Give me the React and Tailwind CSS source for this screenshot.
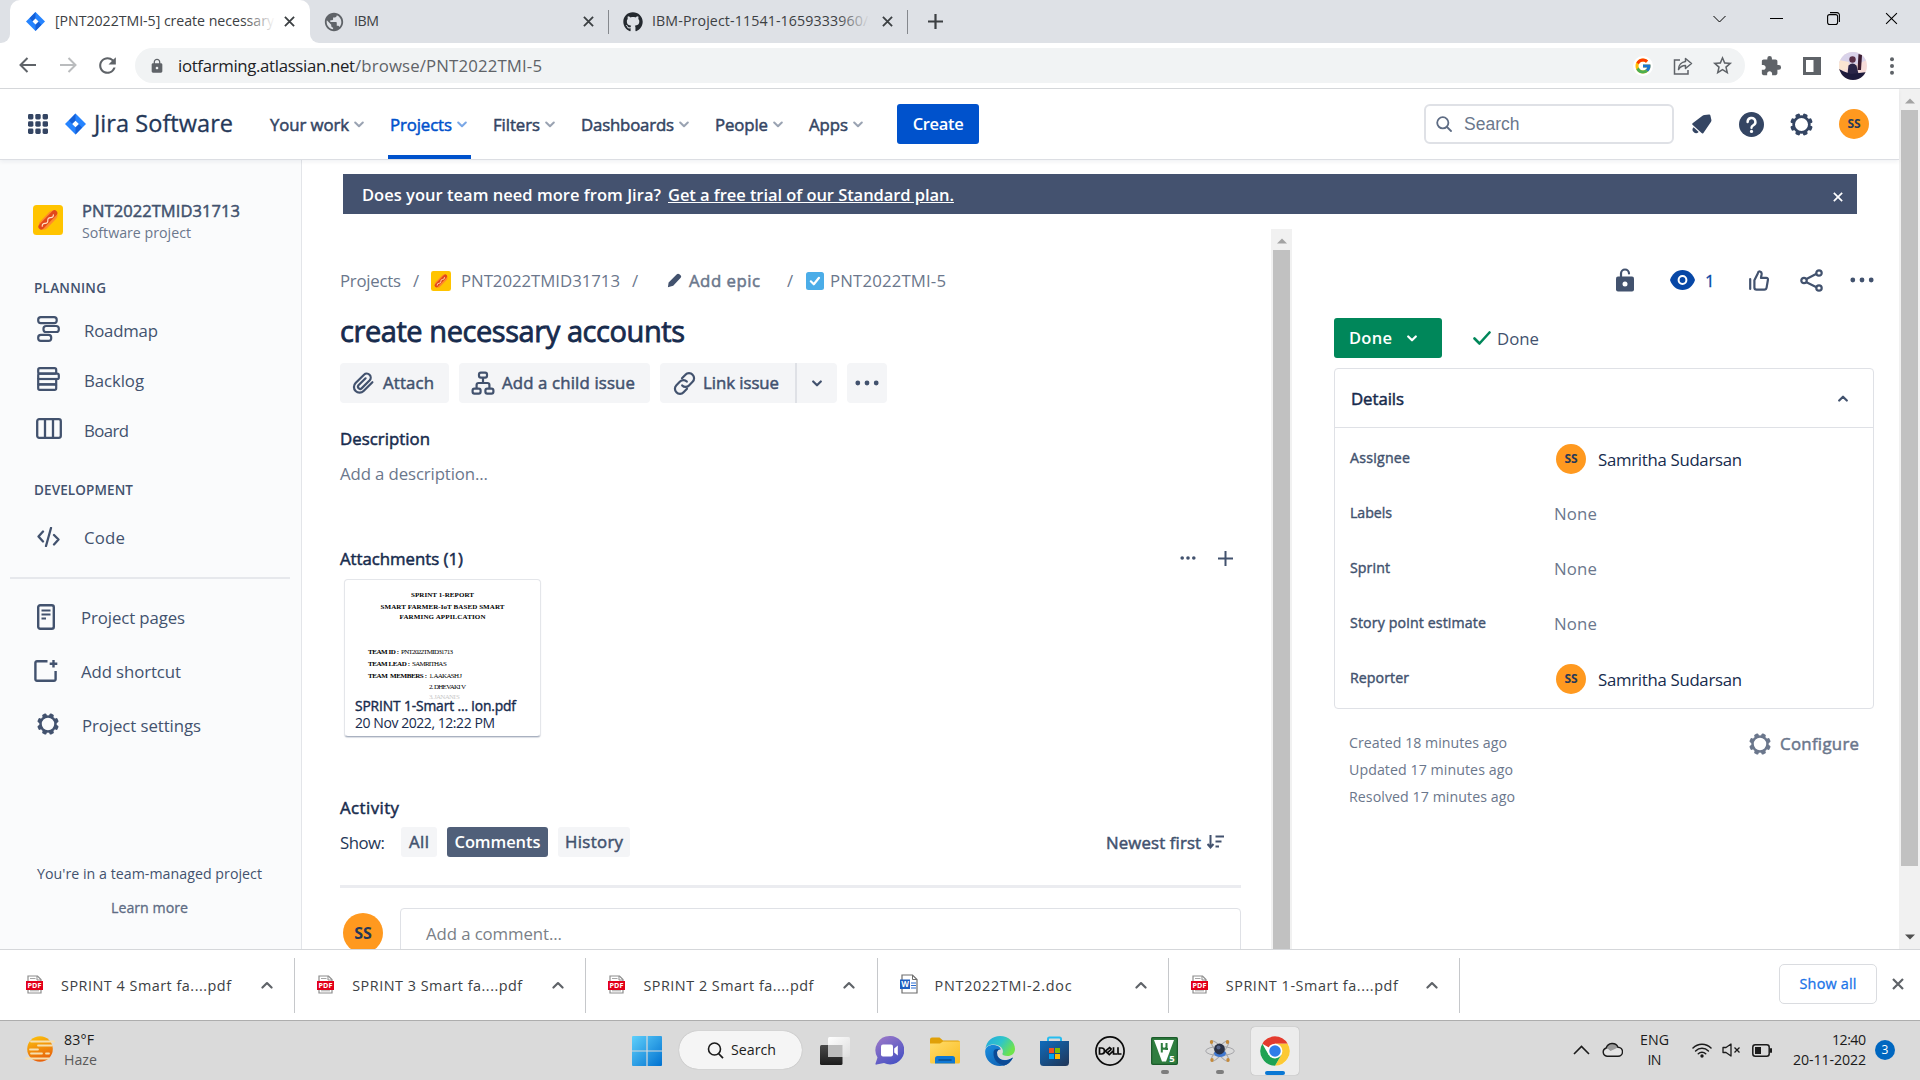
import React, { useLayoutEffect, useRef } from "react";
import { FaGithub } from "react-icons/fa";
import { FcGoogle } from "react-icons/fc";
import { MdExtension, MdPublic, MdLock, MdRefresh, MdStarBorder } from "react-icons/md";

/* Regular letterforms thickened a little: sits between weight 400 and 600. */
const MED = " [-webkit-text-stroke:0.5px_currentColor] ";

/* Text set to a fixed advance width by adjusting its letter spacing. */
function Fit({ w, className = "", children }) {
  const ref = useRef(null);
  useLayoutEffect(() => {
    const el = ref.current;
    el.style.letterSpacing = "0px";
    const natural = el.getBoundingClientRect().width;
    const n = el.textContent.length;
    el.style.letterSpacing = (w - natural) / Math.max(1, n - 1) + "px";
  }, [w, children]);
  return (
    <span className={"block shrink-0 whitespace-pre " + className} style={{ width: w }}>
      <span ref={ref}>{children}</span>
    </span>
  );
}

function Svg({ w, h, vb, className = "", children }) {
  return (
    <svg width={w} height={h ?? w} viewBox={vb ?? `0 0 ${w} ${h ?? w}`} fill="none" className={"block shrink-0 " + className}>
      {children}
    </svg>
  );
}

const JiraMark = ({ w, h }) => (
  <Svg w={w} h={h} vb="0 0 24 24">
    <path d="M12 0 24 12 12 24 0 12Z" fill="#2684ff" />
    <path d="M12 0V8.5L8.5 12 4.5 8Z" fill="#1560d8" />
    <path d="M12 24V15.5L15.500 12 19.5 16Z" fill="#1560d8" />
    <path d="M12 8.2 15.8 12 12 15.8 8.2 12Z" fill="#fff" />
  </Svg>
);

const Chevron = ({ className = "", w = 10, sw = 2 }) => (
  <Svg w={w} h={w * 0.7} vb="0 0 10 7" className={className}>
    <path d="M1.2 1.5 5 5.3 8.8 1.5" stroke="currentColor" strokeWidth={sw} strokeLinecap="round" strokeLinejoin="round" />
  </Svg>
);

const Cross = ({ w = 11, sw = 2, className = "" }) => (
  <Svg w={w} vb="0 0 12 12" className={className}>
    <path d="M1 1 11 11M11 1 1 11" stroke="currentColor" strokeWidth={sw} />
  </Svg>
);

const Dots = ({ w = 24, r = 2.4, className = "" }) => (
  <Svg w={w} h={6} vb={`0 0 ${w} 6`} className={className}>
    <circle cx={r + 0.4} cy="3" r={r} fill="currentColor" />
    <circle cx={w / 2} cy="3" r={r} fill="currentColor" />
    <circle cx={w - r - 0.4} cy="3" r={r} fill="currentColor" />
  </Svg>
);

const Gear = ({ w, className = "" }) => (
  <Svg w={w} vb="0 0 24 24" className={className}>
    <circle cx="12" cy="12" r="8.2" stroke="currentColor" strokeWidth="2.8" />
    {[22.5, 67.5, 112.5, 157.5, 202.5, 247.5, 292.5, 337.5].map((a) => (
      <rect key={a} x="9.5" y="0.2" width="5" height="4" rx="1.4" fill="currentColor" transform={`rotate(${a} 12 12)`} />
    ))}
  </Svg>
);

const HotDog = ({ w }) => (
  <Svg w={w} vb="0 0 30 30">
    <rect width="30" height="30" rx="3.5" fill="#ffc400" />
    <g transform="rotate(-46 15 15)">
      <rect x="3.6" y="10.4" width="22.8" height="9.6" rx="4.8" fill="#ff8b2b" />
      <rect x="2.6" y="12" width="24.8" height="5.6" rx="2.8" fill="#e2471b" />
      <path d="M6.5 15.2q2-2.2 4 0t4 0 4 0 4 0" stroke="#ffe2c2" strokeWidth="1.2" strokeLinecap="round" />
    </g>
  </Svg>
);

const Avatar = ({ className }) => (
  <span className={"flex shrink-0 items-center justify-center rounded-full bg-[#ff991f] font-bold text-[#253858] " + className}>SS</span>
);

const ArrowUp = ({ flip, color }) => (
  <Svg w={10} h={6} className={flip ? "rotate-180" : ""}>
    <path d="M5 0.5 10 5.5H0Z" fill={color} />
  </Svg>
);

/* ------------------------------------------------------------ browser */

function TabStrip() {
  return (
    <div className="flex h-[43px] items-center bg-[#dee1e6] text-[14.2px] text-[#3c4043]">
      <div className="flex h-full w-[10px] items-end bg-white">
        <div className="h-full w-full rounded-br-[9px] bg-[#dee1e6]" />
      </div>
      <div className="h-full w-[300px] bg-[#dee1e6]">
        <div className="flex h-full items-center rounded-t-[10px] bg-white pl-4">
          <JiraMark w={19} h={19} />
          <div className="relative -mt-[2px] ml-[10px] w-[220px] overflow-hidden">
            <Fit w={219}>[PNT2022TMI-5] create necessary</Fit>
            <div className="absolute inset-y-0 right-0 w-8 bg-gradient-to-r from-transparent to-white" />
          </div>
          <Cross className="ml-[9px]" />
        </div>
      </div>
      <div className="h-full w-[10px] bg-white">
        <div className="h-full w-full rounded-bl-[9px] bg-[#dee1e6]" />
      </div>
      <MdPublic className="ml-[3px] size-[22px] shrink-0 text-[#5f6368]" />
      <Fit w={25} className="-mt-[2px] ml-[9px]">IBM</Fit>
      <Cross className="ml-[204px]" />
      <div className="ml-[14px] h-6 w-px bg-[#85888d]" />
      <FaGithub className="ml-[14px] size-[20px] shrink-0 text-[#24292f]" />
      <div className="relative -mt-[2px] ml-[9px] w-[218px] overflow-hidden">
        <Fit w={224}>IBM-Project-11541-1659333960/S</Fit>
        <div className="absolute inset-y-0 right-0 w-8 bg-gradient-to-r from-transparent to-[#dee1e6]" />
      </div>
      <Cross className="ml-[12px]" />
      <div className="ml-[14px] h-6 w-px bg-[#85888d]" />
      <Svg w={15} className="ml-5">
        <path d="M7.5 0V15M0 7.5H15" stroke="#3c4043" strokeWidth="2.2" />
      </Svg>
      <div className="mb-[6px] ml-auto flex items-center text-black">
        <Svg w={13} h={8}><path d="M.5 1 6.5 7 12.5 1" stroke="currentColor" /></Svg>
        <div className="ml-[44px] h-px w-[13px] bg-black" />
        <Svg w={13} className="ml-[44px]">
          <rect x=".6" y="2.6" width="10" height="10" rx="2" stroke="currentColor" strokeWidth="1.1" />
          <path d="M3 .6H10a2.4 2.4 0 0 1 2.4 2.4V10" stroke="currentColor" strokeWidth="1.1" />
        </Svg>
        <Cross w={13} sw={1} className="ml-[45px] mr-[22px]" />
      </div>
    </div>
  );
}

function Toolbar() {
  return (
    <div className="flex h-[46px] items-center border-b border-[#d5d7da] bg-white text-[#5f6368]">
      <Svg w={17} h={16} className="-mt-px ml-[19px]"><path d="M17 8H1.5M8.5 1 1.5 8l7 7" stroke="currentColor" strokeWidth="2" /></Svg>
      <Svg w={17} h={16} className="-mt-px ml-6 text-[#babcbe]"><path d="M0 8H15.5M8.5 1l7 7-7 7" stroke="currentColor" strokeWidth="2" /></Svg>
      <MdRefresh className="-mt-px ml-[18px] size-[25px] shrink-0" />
      <div className="ml-[15px] flex h-[35px] w-[1610px] items-center rounded-full bg-[#f1f3f4] pl-[14px]">
        <MdLock className="size-4" />
        <Fit w={177} className="ml-[13px] mt-px text-[16.8px] text-[#202124]">iotfarming.atlassian.net</Fit>
        <Fit w={187} className="mt-px text-[16.8px]">/browse/PNT2022TMI-5</Fit>
        <span className="ml-auto flex size-5 items-center justify-center rounded-full bg-white"><FcGoogle className="size-[18px]" /></span>
        <Svg w={20} className="ml-[20px]">
          <path d="M7 4H1.5v14H15v-4" stroke="currentColor" strokeWidth="1.5" />
          <path d="M12.5 2.5 18.5 7.5 12.5 12.5V9.5C9 9.5 7 11 5.5 13.5 5.5 9 8.5 6 12.5 5.5Z" stroke="currentColor" strokeWidth="1.5" strokeLinejoin="round" />
        </Svg>
        <MdStarBorder className="ml-[18px] mr-[11px] size-[23px]" />
      </div>
      <MdExtension className="ml-[15px] size-[22px] shrink-0" />
      <Svg w={18} className="ml-[21px]"><path fillRule="evenodd" d="M0 0H18V18H0ZM3 3V15H10.5V3Z" fill="currentColor" /></Svg>
      <Svg w={28} vb="0 0 28 28" className="ml-[18px] rounded-full">
        <rect width="28" height="28" fill="#f6dcd9" />
        <path d="M0 0H28V8L18 12 0 11Z" fill="#d9d3ea" />
        <path d="M0 8 10 10 8 17 0 19Z" fill="#fbe6d2" />
        <circle cx="13.5" cy="7.5" r="3.2" fill="#5a3048" />
        <path d="M8 26 9.500 13.5q4-4 8 0l3 12.5Z" fill="#2a2547" />
        <path d="M0 17 5 19.5 12 22 28 20V28H0Z" fill="#1d1b3c" />
        <path d="M19.5 2 23 3 22 18 18.500 18Z" fill="#3b1c30" />
      </Svg>
      <Svg w={4} h={18} className="ml-[23px]">
        <circle cx="2" cy="2.2" r="2" fill="currentColor" />
        <circle cx="2" cy="9" r="2" fill="currentColor" />
        <circle cx="2" cy="15.8" r="2" fill="currentColor" />
      </Svg>
    </div>
  );
}

/* --------------------------------------------------------------- jira */

function NavItem({ w, gap, active, children }) {
  return (
    <div className={"flex h-full shrink-0 flex-col " + gap}>
      <div className={"flex flex-1 items-center pt-1 " + (active ? "text-[#0052cc]" : "text-[#344563]")}>
        <div className="flex items-center gap-[5px] pl-[2px] pr-[4px]">
          <Fit w={w} className={"mt-[2px] text-[16.8px]" + MED}>{children}</Fit>
          <Chevron className={active ? "text-[#7aa7e6]" : "text-[#9aa3b2]"} />
        </div>
      </div>
      <div className={"h-1 " + (active ? "bg-[#0052cc]" : "")} />
    </div>
  );
}

function TopNav() {
  return (
    <div className="relative z-10 flex h-[71px] shrink-0 items-center border-b border-[#dcdee3] bg-white shadow-[0_2px_4px_rgba(9,30,66,0.06)]">
      <Svg w={20} className="ml-7 text-[#344563]">
        {[0, 7.3, 14.6].map((y) => [0, 7.3, 14.6].map((x) => <rect key={x + "-" + y} x={x} y={y} width="5.4" height="5.4" rx="1.4" fill="currentColor" />))}
      </Svg>
      <div className="ml-[17px]"><JiraMark w={21} h={22} /></div>
      <Fit w={139} className="-mt-px ml-2 text-[23.5px] text-[#253858] [-webkit-text-stroke:0.3px_currentColor]">Jira Software</Fit>
      <NavItem w={79} gap="ml-[35px]">Your work</NavItem>
      <NavItem w={62} gap="ml-[20px]" active>Projects</NavItem>
      <NavItem w={47} gap="ml-[20px]">Filters</NavItem>
      <NavItem w={93} gap="ml-[20px]">Dashboards</NavItem>
      <NavItem w={53} gap="ml-[20px]">People</NavItem>
      <NavItem w={39} gap="ml-[20px]">Apps</NavItem>
      <button className="ml-[30px] flex h-10 w-[82px] items-center justify-center rounded-[3px] bg-[#0052cc]">
        <Fit w={51} className="mt-px text-[16.5px] font-semibold text-white">Create</Fit>
      </button>
      <div className="ml-auto flex h-10 w-[250px] items-center rounded-[6px] border-2 border-[#dfe1e6] pl-[10px]">
        <Svg w={16} className="text-[#5e6c84]">
          <circle cx="6.8" cy="6.8" r="5.6" stroke="currentColor" strokeWidth="1.8" />
          <path d="M11 11 15 15" stroke="currentColor" strokeWidth="1.8" strokeLinecap="round" />
        </Svg>
        <span className="ml-3 font-[Liberation_Sans] text-[17.5px] text-[#6b778c]">Search</span>
      </div>
      <Svg w={21} className="ml-[17px] text-[#344563]">
        <path d="M11.5 1.8q.8-.9 2-.9l4.600-.3q1-.1 1.300.9l1 4.500q.2 1.100-.5 1.900L12.400 18.900q-.8.9-1.800.2L1.500 10.8q-.8-.9.1-1.600Z" fill="currentColor" />
        <path d="M2.6 13.2 7.6 18A3.4 3.4 0 1 1 2.6 13.2Z" fill="currentColor" />
      </Svg>
      <Svg w={25} className="ml-[27px]">
        <circle cx="12.5" cy="12.5" r="12.5" fill="#344563" />
        <path d="M8.6 10a3.9 3.9 0 1 1 5.6 3.4q-1.7.8-1.7 2.3" stroke="#fff" strokeWidth="2.4" strokeLinecap="round" />
        <circle cx="12.5" cy="19.4" r="1.6" fill="#fff" />
      </Svg>
      <Gear w={23} className="ml-[26px] text-[#344563]" />
      <Avatar className="ml-[26px] mr-[30px] size-[30px] text-[12px]" />
    </div>
  );
}

function SideRow({ icon, w, left = 36, textLeft = 84, mt = "", children }) {
  return (
    <div className={"flex h-[50px] shrink-0 items-center " + mt}>
      <div className="flex shrink-0 items-center text-[#42526e]" style={{ paddingLeft: left, width: textLeft }}>{icon}</div>
      <Fit w={w} className="mt-[2px] text-[16.8px] text-[#42526e]">{children}</Fit>
    </div>
  );
}

function Sidebar() {
  return (
    <div className="flex w-[302px] shrink-0 flex-col border-r border-[#e3e5e9] bg-[#fafbfc] text-[#42526e]">
      <div className="mt-[35px] flex h-[50px] items-center pl-[33px]">
        <HotDog w={30} />
        <div className="ml-[19px] mt-[3px] flex flex-col">
          <Fit w={158} className={"text-[16.5px] leading-[23px]" + MED}>PNT2022TMID31713</Fit>
          <Fit w={109} className="text-[14.2px] leading-[22px] text-[#6b778c]">Software project</Fit>
        </div>
      </div>
      <Fit w={72} className="ml-[34px] mt-[33px] text-[13.5px] font-semibold leading-5">PLANNING</Fit>
      <SideRow mt="mt-[7px]" w={74} left={37} icon={
        <Svg w={23} h={26} className="-mt-[2px]">
          <rect x="1.2" y="1.2" width="18.5" height="6" rx="2.6" stroke="currentColor" strokeWidth="2.2" />
          <rect x="6.5" y="10" width="15.3" height="6" rx="2.6" stroke="currentColor" strokeWidth="2.2" />
          <rect x="1.2" y="18.8" width="13" height="6" rx="2.6" stroke="currentColor" strokeWidth="2.2" />
        </Svg>}>Roadmap</SideRow>
      <SideRow w={60} left={37} icon={
        <Svg w={23} h={24} className="-mt-[3px]">
          <rect x="1.2" y="1.2" width="18" height="5.4" rx="1.6" stroke="currentColor" strokeWidth="2.2" />
          <rect x="1.2" y="6.6" width="20.6" height="5.4" rx="1.6" stroke="currentColor" strokeWidth="2.2" />
          <rect x="1.2" y="12" width="18" height="5.4" stroke="currentColor" strokeWidth="2.2" />
          <rect x="1.2" y="17.4" width="18" height="5.4" rx="1.6" stroke="currentColor" strokeWidth="2.2" />
        </Svg>}>Backlog</SideRow>
      <SideRow w={45} icon={
        <Svg w={26} h={21} className="-mt-[3px]">
          <rect x="1.2" y="1.2" width="23.6" height="18.6" rx="2" stroke="currentColor" strokeWidth="2.3" />
          <path d="M9 1V20M17 1V20" stroke="currentColor" strokeWidth="2.3" />
        </Svg>}>Board</SideRow>
      <Fit w={99} className="ml-[34px] mt-[25px] text-[13.5px] font-semibold leading-5">DEVELOPMENT</Fit>
      <SideRow mt="mt-[12px]" w={41} left={37} icon={
        <Svg w={23} h={20}>
          <path d="M6 4.5 1.5 9.5 6 14.5M17 8 21.5 12.5 17 17.5M14 1 9 19" stroke="currentColor" strokeWidth="2.3" strokeLinecap="round" strokeLinejoin="round" />
        </Svg>}>Code</SideRow>
      <div className="ml-[10px] mt-[15px] h-[2px] w-[280px] shrink-0 bg-[#e6e8ec]" />
      <SideRow mt="mt-[13px]" w={104} left={37} textLeft={81} icon={
        <Svg w={18} h={26}>
          <rect x="1.2" y="1.2" width="15.6" height="23.6" rx="2" stroke="currentColor" strokeWidth="2.4" />
          <path d="M4.5 6.5H13.5M4.5 10.5H13.5M4.5 14.5H9" stroke="currentColor" strokeWidth="2" />
        </Svg>}>Project pages</SideRow>
      <SideRow mt="mt-1" w={100} left={34} textLeft={81} icon={
        <Svg w={24} h={24}>
          <path d="M13.5 2.2H3A1.6 1.6 0 0 0 1.4 3.8V20.2A1.6 1.6 0 0 0 3 21.8H20A1.6 1.6 0 0 0 21.6 20.2V12" stroke="currentColor" strokeWidth="2.4" />
          <path d="M19.5 1V8.6M15.7 4.8H23.3" stroke="currentColor" strokeWidth="2.4" />
        </Svg>}>Add shortcut</SideRow>
      <SideRow mt="mt-1" w={119} left={37} textLeft={82} icon={<Gear w={22} className="-mt-[2px]" />}>Project settings</SideRow>
      <Fit w={225} className="ml-[37px] mt-[114px] text-[14.2px] leading-5">You're in a team-managed project</Fit>
      <Fit w={77} className="ml-[111px] mt-[14px] text-[14.2px] leading-5 text-[#5e6c84] [-webkit-text-stroke:0.3px_currentColor]">Learn more</Fit>
    </div>
  );
}

function AttachmentCard() {
  return (
    <div className="relative ml-[4px] mt-2 h-[158px] w-[197px] shrink-0 overflow-hidden rounded-[4px] border border-[#e4e6ea] border-b-[#a9b1c0] bg-white shadow-[0_1px_1px_rgba(9,30,66,0.15)]">
      <div className="font-[Liberation_Serif] text-[7px] leading-[9px] text-black">
        <div className="flex flex-col items-center pt-[11px] font-bold">
          <Fit w={63}>SPRINT 1-REPORT</Fit>
          <Fit w={124} className="mt-[3px]">SMART FARMER-IoT BASED SMART</Fit>
          <Fit w={86} className="mt-px">FARMING APPILCATION</Fit>
        </div>
        <div className="ml-[23px] mt-[26px] flex gap-[2px]"><Fit w={31} className="font-bold">TEAM ID :</Fit><Fit w={52}>PNT2022TMID31713</Fit></div>
        <div className="ml-[23px] mt-[3px] flex gap-[2px]"><Fit w={42} className="font-bold">TEAM LEAD :</Fit><Fit w={35}>SAMRITHA S</Fit></div>
        <div className="ml-[23px] mt-[3px] flex gap-[2px]"><Fit w={59} className="font-bold">TEAM  MEMBERS :</Fit><Fit w={33}>1. AAKASH J</Fit></div>
        <Fit w={37} className="ml-[84px] mt-[2px]">2. DHEVAKI V</Fit>
        <Fit w={31} className="ml-[84px] mt-px leading-[8px] text-[#c9c9c9]">3. JANANI S</Fit>
      </div>
      <div className="absolute bottom-[5px] left-[10px] flex flex-col text-[#172b4d]">
        <Fit w={161} className="text-[13.8px] leading-[17px] [-webkit-text-stroke:0.4px_currentColor]">SPRINT 1-Smart ... ion.pdf</Fit>
        <Fit w={140} className="text-[14px] leading-[17px]">20 Nov 2022, 12:22 PM</Fit>
      </div>
    </div>
  );
}

function IssueMain() {
  const btn = "flex h-10 shrink-0 items-center bg-[#f4f5f7] text-[16.8px] text-[#42526e] " + MED;
  return (
    <div className="flex w-[969px] shrink-0 flex-col overflow-hidden pl-[38px] pt-[15px] text-[16.8px] text-[#172b4d]">
      <div className="mt-[40px] flex h-6 shrink-0 items-center text-[#6b778c]">
        <Fit w={61}>Projects</Fit>
        <span className="ml-[12px] w-[18px]">/</span>
        <HotDog w={20} />
        <Fit w={159} className="ml-[10px]">PNT2022TMID31713</Fit>
        <span className="ml-[12px] w-[35px]">/</span>
        <Svg w={15} className="-mt-px text-[#42526e]"><path d="M9.600 1.400q1.400-1.400 2.800-.2l1.200 1q1.200 1.200.1 2.600L6.200 12.800 0.900 14.200 1.600 9.400Z" fill="currentColor" /></Svg>
        <Fit w={71} className={"ml-[7px]" + MED}>Add epic</Fit>
        <span className="ml-[27px] w-[19px]">/</span>
        <Svg w={18}>
          <rect width="18" height="18" rx="2.5" fill="#4bade8" />
          <path d="M4.8 9.3 7.8 12.3 13 5.8" stroke="#fff" strokeWidth="2.2" strokeLinecap="round" strokeLinejoin="round" />
        </Svg>
        <Fit w={116} className="ml-[6px]">PNT2022TMI-5</Fit>
      </div>
      <Fit w={345} className="mt-[18px] text-[29px] leading-10 [-webkit-text-stroke:0.8px_currentColor]">create necessary accounts</Fit>
      <div className="mt-[12px] flex shrink-0">
        <button className={btn + "w-[109px] rounded-[4px] pl-3"}>
          <Svg w={23}>
            <path d="M20.4 10.2 11.6 19a5.6 5.6 0 0 1-8-8L12 2.7a4 4 0 0 1 5.7 5.6L9.6 16.4A2.2 2.2 0 0 1 6.5 13.3L13.6 6.3" stroke="currentColor" strokeWidth="2.2" strokeLinecap="round" />
          </Svg>
          <Fit w={51} className="ml-2">Attach</Fit>
        </button>
        <button className={btn + "ml-[10px] w-[191px] rounded-[4px] pl-3"}>
          <Svg w={24}>
            <rect x="8" y="1.6" width="8" height="5" rx="1.8" stroke="currentColor" strokeWidth="2.2" />
            <rect x="1.6" y="17.6" width="8" height="5" rx="1.8" stroke="currentColor" strokeWidth="2.2" />
            <rect x="14.4" y="17.6" width="8" height="5" rx="1.8" stroke="currentColor" strokeWidth="2.2" />
            <path d="M12 6.6V12M5.6 17.6V14Q5.6 12 7.6 12H16.4Q18.4 12 18.4 14V17.6" stroke="currentColor" strokeWidth="2.2" />
          </Svg>
          <Fit w={133} className="ml-[7px]">Add a child issue</Fit>
        </button>
        <button className={btn + "ml-[10px] w-[135px] rounded-l-[4px] pl-[13px]"}>
          <Svg w={23}>
            <path d="M9 6.2 12.4 2.8a4.7 4.7 0 0 1 7.2 0 4.9 4.9 0 0 1 0 7L16 13.4a4.6 4.6 0 0 1-6.8 0" stroke="currentColor" strokeWidth="2.2" strokeLinecap="round" />
            <path d="M14 16.8 10.6 20.2a4.7 4.7 0 0 1-7.2 0 4.9 4.9 0 0 1 0-7L7 9.6a4.6 4.6 0 0 1 6.8 0" stroke="currentColor" strokeWidth="2.2" strokeLinecap="round" />
          </Svg>
          <Fit w={76} className="ml-[7px]">Link issue</Fit>
        </button>
        <button className={btn + "w-[42px] justify-center rounded-r-[4px] border-l-2 border-[#dfe1e6]"}><Chevron sw={2.2} /></button>
        <button className={btn + "ml-[10px] w-10 justify-center rounded-[4px]"}><Dots /></button>
      </div>
      <Fit w={90} className={"mt-[24px] leading-6" + MED}>Description</Fit>
      <Fit w={148} className="mt-[11px] leading-6 text-[#6b778c]">Add a description...</Fit>
      <div className="mt-[61px] flex h-6 shrink-0 items-center text-[#42526e]">
        <Fit w={123} className={"text-[#172b4d]" + MED}>Attachments (1)</Fit>
        <Dots w={16} r={1.8} className="-mt-[2px] ml-[717px]" />
        <Svg w={15} className="-mt-[2px] ml-[22px]"><path d="M7.5 0V15M0 7.5H15" stroke="currentColor" strokeWidth="2" /></Svg>
      </div>
      <AttachmentCard />
      <Fit w={59} className={"mt-[59px] leading-6" + MED}>Activity</Fit>
      <div className="mt-[7px] flex h-[30px] shrink-0 items-center text-[#42526e]">
        <Fit w={45} className="mt-[2px] text-[#253858]">Show:</Fit>
        <span className="ml-4 flex h-[30px] w-9 items-center justify-center rounded-[3px] bg-[#f4f5f7]"><Fit w={20} className={MED}>All</Fit></span>
        <span className="ml-[10px] flex h-[30px] w-[101px] items-center justify-center rounded-[3px] bg-[#505f79]"><Fit w={86} className="text-[16.5px] font-semibold text-white">Comments</Fit></span>
        <span className="ml-[10px] flex h-[30px] w-[72px] items-center justify-center rounded-[3px] bg-[#f4f5f7]"><Fit w={58} className={MED}>History</Fit></span>
        <Fit w={95} className={"ml-[476px] mt-[2px]" + MED}>Newest first</Fit>
        <Svg w={17} h={14} className="ml-[6px]">
          <path d="M3.5 0V12M0.5 9 3.5 12.4 6.5 9M8.5 1.4H17M8.5 6.4H14.5M8.5 11.4H12" stroke="currentColor" strokeWidth="2" />
        </Svg>
      </div>
      <div className="mt-[28px] h-[3px] w-[901px] shrink-0 bg-[#ebecf0]" />
      <div className="mt-5 flex shrink-0">
        <Avatar className="ml-[3px] mt-[5px] size-10 text-[16px]" />
        <div className="ml-[17px] flex h-[60px] w-[841px] rounded-[4px] border border-[#dfe1e6] pl-[25px] pt-[12px] text-[#7a7f87]">
          <Fit w={136}>Add a comment...</Fit>
        </div>
      </div>
    </div>
  );
}

function DetailRow({ label, lw, person }) {
  return (
    <div className="flex h-[55px] items-center">
      <Fit w={lw} className="-mt-px text-[14.2px] text-[#42526e] [-webkit-text-stroke:0.4px_currentColor]">{label}</Fit>
      <div className="ml-auto flex w-[318px] items-center">
        {person ? (
          <>
            <Avatar className="ml-px size-[30px] text-[12px]" />
            <Fit w={144} className="ml-[12px] mt-[2px] text-[16.8px]">Samritha Sudarsan</Fit>
          </>
        ) : (
          <Fit w={43} className="-ml-px text-[16.8px] text-[#6b778c]">None</Fit>
        )}
      </div>
    </div>
  );
}

function IssueSide() {
  return (
    <div className="flex w-[607px] flex-col pl-[42px] text-[#172b4d]">
      <div className="mt-[51px] flex h-[30px] shrink-0 items-center pl-[282px] text-[#42526e]">
        <Svg w={18} h={24}>
          <rect y="8.5" width="18" height="15" rx="2" fill="currentColor" />
          <path d="M5 9V5.500a4 4 0 0 1 8 0" stroke="currentColor" strokeWidth="2.2" strokeLinecap="round" />
          <circle cx="9" cy="16" r="2.5" fill="#fff" />
        </Svg>
        <Svg w={25} h={20} className="ml-[36px]">
          <path d="M12.5 0C18.5 0 23 4 25 10 23 16 18.5 20 12.5 20S2 16 0 10C2 4 6.5 0 12.5 0Z" fill="#0747a6" />
          <circle cx="12.5" cy="10" r="3.9" stroke="#fff" strokeWidth="2" />
        </Svg>
        <Fit w={8} className="ml-[10px] mt-[2px] text-[16.8px] text-[#0747a6] [-webkit-text-stroke:0.3px_currentColor]">1</Fit>
        <Svg w={20} h={21} className="ml-[36px]">
          <path d="M1.2 9V19" stroke="currentColor" strokeWidth="2.2" strokeLinecap="round" />
          <path d="M5.4 17.5V10.2L8.8 3.4Q9.2 1.2 11 1.5 12.9 2 12.6 4.2L12 7.8H17.2Q19.2 8 18.9 10L17.6 17.6Q17.2 19.6 15.3 19.6H7.5Q5.4 19.6 5.4 17.5Z" stroke="currentColor" strokeWidth="2.2" strokeLinejoin="round" />
        </Svg>
        <Svg w={23} className="ml-[31px]">
          <path d="M6 10.2 17 4.5M6 13 17 18.5" stroke="currentColor" strokeWidth="2.2" />
          <circle cx="4" cy="11.5" r="2.7" stroke="currentColor" strokeWidth="2.2" />
          <circle cx="19" cy="4" r="2.7" stroke="currentColor" strokeWidth="2.2" />
          <circle cx="19" cy="19" r="2.7" stroke="currentColor" strokeWidth="2.2" />
        </Svg>
        <Dots className="ml-[27px]" />
      </div>
      <div className="mt-[23px] flex h-10 shrink-0 items-center">
        <div className="flex h-10 w-[108px] items-center rounded-[3px] bg-[#00875a] pl-[15px] text-white">
          <Fit w={43} className="mt-px text-[16.5px] font-semibold">Done</Fit>
          <Chevron className="ml-[15px]" sw={2.2} />
        </div>
        <Svg w={18} h={15} className="ml-[31px]"><path d="M1.5 7.5 6.5 12.5 16.5 1.5" stroke="#00875a" strokeWidth="2.6" strokeLinecap="round" strokeLinejoin="round" /></Svg>
        <Fit w={42} className="ml-[6px] mt-[2px] text-[16.8px] text-[#42526e]">Done</Fit>
      </div>
      <div className="mt-[10px] h-[341px] w-[540px] shrink-0 rounded-[4px] border border-[#dfe1e6]">
        <div className="flex h-[59px] items-center border-b border-[#dfe1e6] pl-4 pr-[25px]">
          <Fit w={53} className={"mt-[2px] text-[16.8px]" + MED}>Details</Fit>
          <Chevron className="ml-auto rotate-180 text-[#42526e]" sw={2.2} />
        </div>
        <div className="pl-[15px] pt-[3px]">
          <DetailRow label="Assignee" lw={60} person />
          <DetailRow label="Labels" lw={42} />
          <DetailRow label="Sprint" lw={40} />
          <DetailRow label="Story point estimate" lw={136} />
          <DetailRow label="Reporter" lw={59} person />
        </div>
      </div>
      <div className="mt-[20px] flex pl-[15px] text-[#6b778c]">
        <div className="flex w-[400px] flex-col text-[14.2px] leading-[27px]">
          <Fit w={158}>Created 18 minutes ago</Fit>
          <Fit w={164}>Updated 17 minutes ago</Fit>
          <Fit w={166}>Resolved 17 minutes ago</Fit>
        </div>
        <div className="flex h-[30px] items-center">
          <Gear w={22} />
          <Fit w={79} className={"ml-[9px] text-[16.8px]" + MED}>Configure</Fit>
        </div>
      </div>
    </div>
  );
}

function JiraPage() {
  return (
    <div className="flex h-[860px] overflow-hidden">
      <div className="flex w-[1899px] flex-col">
        <TopNav />
        <div className="flex min-h-0 flex-1">
          <Sidebar />
          <div className="flex flex-1 flex-col overflow-hidden bg-white">
            <div className="ml-[41px] mt-[14px] flex h-10 w-[1514px] shrink-0 items-center bg-[#44526f] pl-[19px] text-[16.5px] font-semibold text-white">
              <Fit w={299} className="mt-[3px]">Does your team need more from Jira?</Fit>
              <Fit w={286} className="ml-[7px] mt-[3px] underline">Get a free trial of our Standard plan.</Fit>
              <Cross className="ml-auto mr-[14px] mt-[5px]" w={10} />
            </div>
            <div className="flex min-h-0 flex-1">
              <IssueMain />
              <div className="mt-[15px] flex w-[21px] shrink-0 flex-col items-center bg-[#f1f1f1] pt-[9px]">
                <ArrowUp color="#a3a3a3" />
                <div className="mt-[6px] w-[17px] flex-1 bg-[#c1c1c1]" />
              </div>
              <IssueSide />
            </div>
          </div>
        </div>
      </div>
      <div className="flex w-[21px] flex-col items-center bg-[#f1f1f1] pt-[9px]">
        <ArrowUp color="#a3a3a3" />
        <div className="mt-[6px] h-[756px] w-[17px] bg-[#c1c1c1]" />
        <div className="mt-[68px]"><ArrowUp flip color="#505050" /></div>
      </div>
    </div>
  );
}

/* ---------------------------------------------------------- downloads */

const PdfIcon = () => (
  <Svg w={17} h={19} vb="0 0 17 19">
    <path d="M2 1H11.5L15 4.5V18H2Z" fill="#fff" stroke="#8d8d8d" strokeWidth="1.2" />
    <path d="M4 3.5H9.5M4 15.8H13" stroke="#a5a5a5" />
    <path d="M11 1V5H15" stroke="#8d8d8d" />
    <rect y="6" width="17" height="9" fill="#e2001a" />
    <text x="8.5" y="13.3" textAnchor="middle" fontSize="7.2" fontWeight="700" fill="#fff" fontFamily="Open Sans, sans-serif">PDF</text>
  </Svg>
);

const DocIcon = () => (
  <Svg w={18} h={20} vb="0 0 18 20">
    <path d="M2 1H12.5L17 5.5V19H2Z" fill="#fff" stroke="#6e6e6e" strokeWidth="1.2" />
    <path d="M12.5 1V5.5H17" stroke="#6e6e6e" />
    <path d="M11 9H16M11 11.5H16M11 14H16" stroke="#2b6cd0" />
    <rect y="5.5" width="10" height="9.5" fill="#1f5fc0" />
    <text x="5" y="13.2" textAnchor="middle" fontSize="8" fontWeight="700" fill="#fff" fontFamily="Open Sans, sans-serif">W</text>
  </Svg>
);

function Download({ doc, w, children }) {
  return (
    <div className="flex h-[55px] w-[291.2px] shrink-0 items-center border-r border-[#c6c8cb] pl-[22px]">
      <div className="-mt-[3px] w-[35px]">{doc ? <DocIcon /> : <PdfIcon />}</div>
      <div className="flex w-[200px]"><Fit w={w}>{children}</Fit></div>
      <Chevron w={12} sw={1.8} className="rotate-180 text-[#5f6368]" />
    </div>
  );
}

function DownloadBar() {
  return (
    <div className="flex h-[71px] items-start border-t border-[#d5d7da] bg-white pl-1 pt-2 text-[14.4px] text-[#3c4043]">
      <div className="flex">
        <Download w={170}>SPRINT 4 Smart fa....pdf</Download>
        <Download w={170}>SPRINT 3 Smart fa....pdf</Download>
        <Download w={170}>SPRINT 2 Smart fa....pdf</Download>
        <Download w={137} doc>PNT2022TMI-2.doc</Download>
        <Download w={172}>SPRINT 1-Smart fa....pdf</Download>
      </div>
      <div className="ml-auto mt-[6px] flex h-10 w-[98px] items-center justify-center rounded-[5px] border border-[#dadce0]">
        <Fit w={57} className="text-[#1a73e8] [-webkit-text-stroke:0.3px_currentColor]">Show all</Fit>
      </div>
      <Cross w={12} sw={2.2} className="ml-[15px] mr-[16px] mt-[20px] text-[#5f6368]" />
    </div>
  );
}

/* ------------------------------------------------------------ taskbar */

function Taskbar() {
  return (
    <div className="flex h-[60px] items-center border-t border-[#adadad] bg-[#dadada] text-[14.2px] text-[#1b1b1b]">
      <Svg w={30} h={28} className="-mt-[3px] ml-[25px]">
        <defs><linearGradient id="sun" x1="0" y1="0" x2="0.3" y2="1"><stop stopColor="#fdc60b" /><stop offset="1" stopColor="#e8640c" /></linearGradient></defs>
        <circle cx="15" cy="14" r="12.8" fill="url(#sun)" />
        <path d="M6 6.5H29M13 10.500H27M5 14.500H13M6 18.500H17M21 18.500H24M1 23.500H24" stroke="#f6dfae" strokeWidth="1.8" strokeLinecap="round" />
      </Svg>
      <div className="-mt-[2px] ml-[9px] flex w-[567px] flex-col leading-5">
        <Fit w={30}>83°F</Fit>
        <Fit w={33} className="text-[#5a5a5a]">Haze</Fit>
      </div>
      <Svg w={30} h={30} className="ml-px">
        <defs><linearGradient id="win" x1="0" y1="0" x2="1" y2="1"><stop stopColor="#5fd0fb" /><stop offset="1" stopColor="#0071d0" /></linearGradient></defs>
        <path d="M1 0H14.4V14.4H0V1Q0 0 1 0ZM15.6 0H29Q30 0 30 1V14.4H15.6ZM0 15.6H14.4V30H1Q0 30 0 29ZM15.6 15.6H30V29Q30 30 29 30H15.6Z" fill="url(#win)" />
      </Svg>
      <div className="-mt-px ml-[17px] flex h-[38px] w-[123px] items-center rounded-full bg-[#f5f5f5] pl-7 shadow-[0_0_1px_rgba(0,0,0,0.3)]">
        <Svg w={17}><circle cx="7.5" cy="7" r="6" stroke="#1b1b1b" strokeWidth="1.6" /><path d="M11.5 11.5 16 16.2" stroke="#1b1b1b" strokeWidth="1.8" /></Svg>
        <Fit w={45} className="ml-[7px]">Search</Fit>
      </div>
      <Svg w={30} h={28} className="ml-[18px]">
        <defs>
          <linearGradient id="tv" x1="0" y1="0" x2="0" y2="1"><stop stopColor="#4a4a4a" /><stop offset="1" stopColor="#1d1d1d" /></linearGradient>
          <linearGradient id="tv2" x1="0" y1="0" x2="1" y2="1"><stop stopColor="#fff" /><stop offset="1" stopColor="#dedede" /></linearGradient>
        </defs>
        <rect y="8" width="22.5" height="20" rx="1.5" fill="url(#tv)" />
        <rect x="8" y="0" width="22" height="20" rx="1.5" fill="url(#tv2)" />
        <rect x="8" y="8" width="14.5" height="12" fill="#bdbdbd" />
      </Svg>
      <Svg w={29} h={29} className="ml-[25px]">
        <defs><linearGradient id="chat" x1="0" y1="0" x2="0.6" y2="1"><stop stopColor="#a07ac8" /><stop offset="1" stopColor="#4b53c4" /></linearGradient></defs>
        <path d="M14.5 0A14.2 14.2 0 1 1 9 27L1.5 28.6Q.2 28.8.5 27.5L2.5 21.5A14.2 14.2 0 0 1 14.5 0Z" fill="url(#chat)" />
        <rect x="6" y="8.500" width="12" height="12" rx="2" fill="#fff" />
        <path d="M19.2 12.5 22.8 9.5V19.500L19.2 16.5Z" fill="#fff" />
      </Svg>
      <Svg w={30} h={27} className="ml-[26px]">
        <defs><linearGradient id="fold" x1="0" y1="0" x2="1" y2="1"><stop stopColor="#ffdc6b" /><stop offset="1" stopColor="#fbbd22" /></linearGradient></defs>
        <path d="M0 2.500Q0 .5 2 .5H9.500L13 3.500H28Q30 3.500 30 5.500V12H0Z" fill="#e0a008" />
        <path d="M0 6.500H10L13 4.500H30V25Q30 26.500 28.500 26.500H1.500Q0 26.500 0 25Z" fill="url(#fold)" />
        <path d="M5 26.500V21.500Q5 19 7.500 19H22.500Q25 19 25 21.500V26.500Z" fill="#0f78d4" />
        <path d="M9 23H21" stroke="#0a4d8f" strokeWidth="1.6" strokeLinecap="round" />
      </Svg>
      <Svg w={30} h={30} className="ml-[25px]">
        <defs>
          <linearGradient id="ed1" x1="0" y1="0" x2="1" y2="0.5"><stop stopColor="#22a7e0" /><stop offset=".55" stopColor="#2fc5c9" /><stop offset="1" stopColor="#6ee34c" /></linearGradient>
          <linearGradient id="ed2" x1="0" y1="0" x2="1" y2="1"><stop stopColor="#1a8fe0" /><stop offset="1" stopColor="#0d56a8" /></linearGradient>
        </defs>
        <path d="M.3 13C1.5 5 7.5 0 15 0 23.5 0 30 6 30 13 30 17.5 26.5 20 22.5 20 19 20 17 19 17.3 17.8 18.5 16.5 18.5 11.5 13.5 9.5 8 7.5 1.5 9 .3 13Z" fill="url(#ed1)" />
        <path d="M.2 15C.5 10.5 5 8.500 9 9 13.5 9.500 15.5 11.5 15.8 13.5 12.5 13 11 16 12 19.5 13.5 24 20 26 28 21.5 25.5 26.5 21 30 15 30 6.5 30-.3 23.5.2 15Z" fill="url(#ed2)" />
        <path d="M8.500 16Q9 11.5 15.8 13.5 12.5 13 12 16.5 12 23.5 20 24.5 24 24.5 28 21.5 25 28 19 29.5 8 27 8.500 16Z" fill="#0b4a96" />
      </Svg>
      <Svg w={29} h={30} className="ml-[25px]">
        <defs><linearGradient id="st" x1="0" y1="0" x2="0.8" y2="1"><stop stopColor="#0f6cbd" /><stop offset="1" stopColor="#1f3a5f" /></linearGradient></defs>
        <path d="M8 6V3Q8 1.500 9.500 1.500H19.5Q21 1.500 21 3V6" stroke="#27bdf0" strokeWidth="2" />
        <path d="M0 5H29V26.5Q29 30 25.5 30H3.5Q0 30 0 26.5Z" fill="url(#st)" />
        <rect x="9" y="12" width="5" height="5" fill="#f25022" /><rect x="15" y="12" width="5" height="5" fill="#7fba00" />
        <rect x="9" y="18" width="5" height="5" fill="#00a4ef" /><rect x="15" y="18" width="5" height="5" fill="#ffb900" />
      </Svg>
      <Svg w={30} h={30} className="ml-[26px]">
        <circle cx="15" cy="15" r="14.1" stroke="#0a0a0a" strokeWidth="1.7" />
        <path d="M4.5 12V18H6.5A3 3 0 0 0 6.5 12ZM10.3 15.200 14.6 11.6 16.500 13.200M10.3 15.200 14.3 18.600 18 15.200M12.3 16.900 16.5 13.200M18.5 11.2V18H22M23 11.2V18H26.500" stroke="#0a0a0a" strokeWidth="1.7" />
      </Svg>
      <div className="relative ml-[26px]">
        <Svg w={27} h={28}>
          <rect width="27" height="28" rx="2" fill="#2f7d3f" />
          <rect x=".7" y=".7" width="25.6" height="26.6" rx="1.5" stroke="#1b5a2a" strokeWidth="1.2" />
          <path d="M3 3H23L15 24.5H11Z" fill="#fff" />
          <path d="M10.8 15.500V6M10.8 10.500Q13 13 15.400 10.500M15.500 6V12H17" stroke="#2f7d3f" strokeWidth="2" />
          <text x="21" y="24.500" textAnchor="middle" fontSize="9.500" fontWeight="700" fill="#fff" fontFamily="Open Sans, sans-serif">5</text>
        </Svg>
        <div className="absolute -bottom-[9px] left-[10px] h-1 w-2 rounded-full bg-[#7d7d7d]" />
      </div>
      <div className="relative ml-[27px]">
        <Svg w={30} h={28}>
          <g stroke="#a6a6aa">
            <ellipse cx="15" cy="14" rx="14.3" ry="4.5" />
            <ellipse cx="15" cy="14" rx="13" ry="3.400" transform="rotate(50 15 14)" />
            <ellipse cx="15" cy="14" rx="13" ry="3.400" transform="rotate(-50 15 14)" />
          </g>
          <ellipse cx="15" cy="16.500" rx="6" ry="3.500" fill="#3f78d0" />
          <circle cx="14.500" cy="12" r="5.400" fill="#2b3246" />
          <circle cx="13.500" cy="10.500" r="2" fill="#56658a" />
          {[[6.5, 5], [22.5, 5], [7, 23], [23, 23]].map(([x, y]) => <ellipse key={x + "," + y} cx={x} cy={y} rx="1.7" ry="1.9" fill="#c58a3a" />)}
        </Svg>
        <div className="absolute -bottom-[9px] left-[11px] h-1 w-2 rounded-full bg-[#7d7d7d]" />
      </div>
      <div className="relative ml-4 flex h-12 w-12 items-center justify-center rounded-[4px] bg-[#ececec] shadow-[0_0_1px_rgba(0,0,0,0.35)]">
        <Svg w={30} vb="0 0 48 48">
          <circle cx="24" cy="24" r="23.5" fill="#fff" />
          <path d="M24 24 3.7 12.2A23.5 23.5 0 0 1 44.3 12.2H24Z" fill="#e33b2e" />
          <path d="M24 12.2H44.3A23.5 23.5 0 0 1 24 47.5L34.2 29.9Z" fill="#fcc934" />
          <path d="M13.8 29.9 3.7 12.2A23.5 23.5 0 0 0 24 47.5L34.2 29.9Z" fill="#1fa253" />
          <circle cx="24" cy="24" r="11.8" fill="#fff" />
          <circle cx="24" cy="24" r="9.2" fill="#2f7de9" />
        </Svg>
        <div className="absolute bottom-0 h-1 w-5 rounded-full bg-[#0a78d4]" />
      </div>
      <Svg w={17} h={10} className="-mt-px ml-auto"><path d="M1 9 8.5 1.5 16 9" stroke="#1b1b1b" strokeWidth="1.6" /></Svg>
      <Svg w={21} h={15} className="-mt-[2px] ml-[12px]">
        <path d="M5 14.2A4.2 4.2 0 0 1 4.2 6 6.3 6.3 0 0 1 16 5.2 4.5 4.5 0 0 1 16 14.2Z" fill="#e4e4e4" />
        <path d="M2.500 7Q5 5.500 8.500 9L16 5.500A6.3 6.3 0 0 0 4.500 5Z" fill="#9a9a9a" />
        <path d="M5 14.2A4.2 4.2 0 0 1 4.2 6 6.3 6.3 0 0 1 16 5.2 4.5 4.5 0 0 1 16 14.2Z" stroke="#1b1b1b" strokeWidth="1.4" />
      </Svg>
      <div className="-mt-[2px] ml-[17px] flex w-[29px] flex-col items-center leading-5">
        <Fit w={29}>ENG</Fit>
        <Fit w={14}>IN</Fit>
      </div>
      <Svg w={20} h={16} className="-mt-px ml-[23px]">
        <path d="M1 6A12.7 12.7 0 0 1 19 6M3.6 9A9 9 0 0 1 16.4 9M6.300 11.800A5.300 5.300 0 0 1 13.700 11.800" stroke="#1b1b1b" strokeWidth="1.5" strokeLinecap="round" />
        <circle cx="10" cy="14" r="1.7" fill="#1b1b1b" />
      </Svg>
      <Svg w={19} h={14} className="-mt-px ml-[10px]">
        <path d="M1 4.5H4L9 1V13L4 9.5H1Z" stroke="#1b1b1b" strokeWidth="1.3" strokeLinejoin="round" />
        <path d="M12.5 4.5 17.5 9.5M17.5 4.5 12.5 9.5" stroke="#1b1b1b" strokeWidth="1.3" />
      </Svg>
      <Svg w={20} h={13} className="-mt-px ml-[11px]">
        <rect x=".8" y=".8" width="16.4" height="11.4" rx="2.5" stroke="#1b1b1b" strokeWidth="1.5" />
        <rect x="3" y="3" width="6" height="7" fill="#1b1b1b" />
        <rect x="18" y="4" width="2" height="5" rx="1" fill="#1b1b1b" />
      </Svg>
      <div className="-mt-[2px] ml-[21px] flex w-[73px] flex-col items-end leading-5">
        <Fit w={34}>12:40</Fit>
        <Fit w={73}>20-11-2022</Fit>
      </div>
      <span className="-mt-[2px] ml-[9px] mr-[25px] flex size-5 items-center justify-center rounded-full bg-[#0067c0] text-[12px] text-white">3</span>
    </div>
  );
}

export default function App() {
  return (
    <div className="h-[1080px] w-[1920px] overflow-hidden bg-white font-['Open_Sans',sans-serif]">
      <TabStrip />
      <Toolbar />
      <JiraPage />
      <DownloadBar />
      <Taskbar />
    </div>
  );
}
